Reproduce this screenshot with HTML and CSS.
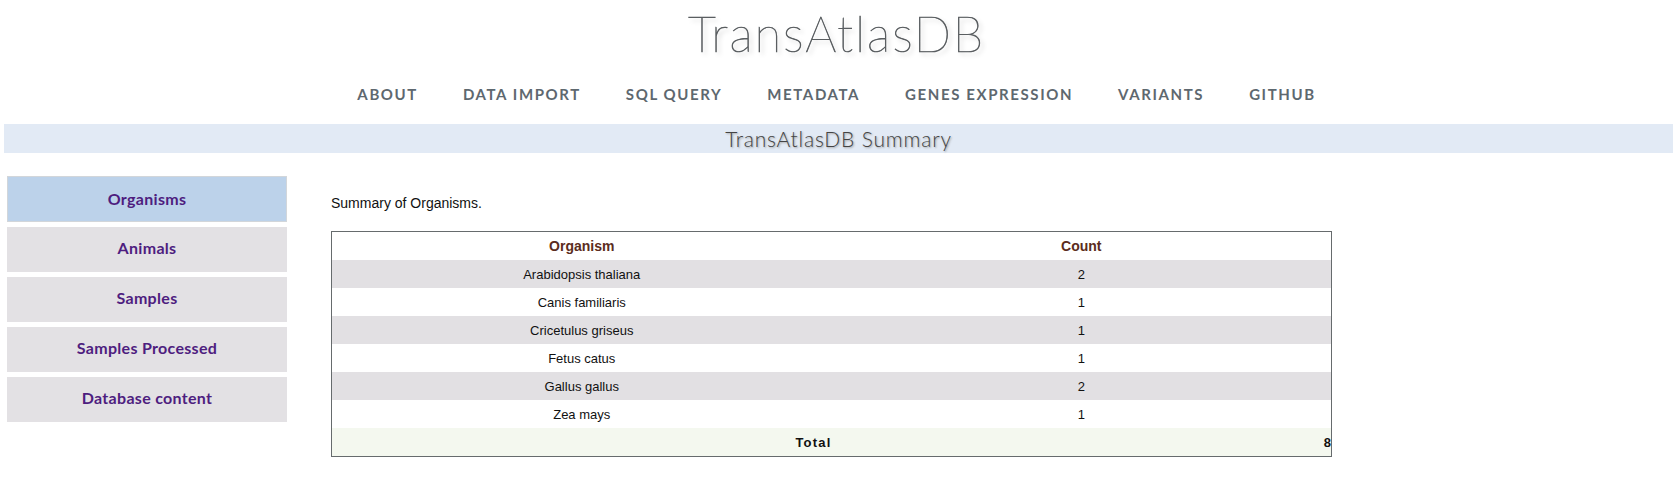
FILE: index.html
```html
<!DOCTYPE html>
<html>
<head>
<meta charset="utf-8">
<title>TransAtlasDB</title>
<link rel="stylesheet" href="styles.css">
</head>
<body>
<header class="masthead">
  <div class="brand">TransAtlasDB</div>
  <nav class="topnav">
    <a href="#">About</a>
    <a href="#">Data Import</a>
    <a href="#">SQL Query</a>
    <a href="#">Metadata</a>
    <a href="#">Genes Expression</a>
    <a href="#">Variants</a>
    <a href="#">GitHub</a>
  </nav>
</header>
<div class="pagebar">TransAtlasDB Summary</div>
<main class="layout">
  <aside class="sidenav">
    <a class="sideitem active" href="#">Organisms</a>
    <a class="sideitem" href="#">Animals</a>
    <a class="sideitem" href="#">Samples</a>
    <a class="sideitem" href="#">Samples Processed</a>
    <a class="sideitem" href="#">Database content</a>
  </aside>
  <section class="content">
    <p class="lead">Summary of Organisms.</p>
    <table class="summary">
      <thead>
        <tr><th>Organism</th><th>Count</th></tr>
      </thead>
      <tbody>
        <tr><td>Arabidopsis thaliana</td><td>2</td></tr>
        <tr><td>Canis familiaris</td><td>1</td></tr>
        <tr><td>Cricetulus griseus</td><td>1</td></tr>
        <tr><td>Fetus catus</td><td>1</td></tr>
        <tr><td>Gallus gallus</td><td>2</td></tr>
        <tr><td>Zea mays</td><td>1</td></tr>
      </tbody>
      <tfoot>
        <tr><th class="total-label">Total</th><th class="total-value">8</th></tr>
      </tfoot>
    </table>
  </section>
</main>
</body>
</html>
```
FILE: styles.css
```css
html, body {
  margin: 0;
  padding: 0;
  background: #ffffff;
}
body {
  font-family: "Liberation Sans", Arial, sans-serif;
  color: #111;
}
.masthead {
  text-align: center;
}
.brand {
  height: 66px;
  line-height: 66px;
  font-family: Lato, "Open Sans", sans-serif;
  font-weight: 200;
  font-size: 49px;
  letter-spacing: 1.9px;
  color: #5a5e61;
  -webkit-text-stroke: 0.7px #5a5e61;
  text-shadow: 3px 3px 4px #a9a9a9;
}
.topnav {
  height: 56px;
  margin-bottom: 2px;
  display: flex;
  justify-content: center;
  align-items: center;
  gap: 45px;
}
.topnav a {
  font-family: Lato, "Open Sans", sans-serif;
  font-weight: 700;
  font-size: 15px;
  letter-spacing: 1.6px;
  text-transform: uppercase;
  text-decoration: none;
  color: #5e686f;
}
.pagebar {
  margin-left: 4px;
  height: 29px;
  line-height: 29px;
  background: #e2eaf5;
  text-align: center;
  font-family: Lato, "Open Sans", sans-serif;
  font-weight: 300;
  font-size: 21px;
  letter-spacing: 0.8px;
  color: #444;
  text-shadow: 1px 1px 2px #a0a0a0;
}
.layout {
  display: flex;
  align-items: flex-start;
  padding-top: 23px;
}
.sidenav {
  margin-left: 7px;
  width: 280px;
  display: flex;
  flex-direction: column;
  gap: 5px;
}
.sideitem {
  height: 45px;
  box-sizing: border-box;
  padding-bottom: 5px;
  display: flex;
  align-items: center;
  justify-content: center;
  background: #e3e1e4;
  font-family: Lato, "Open Sans", sans-serif;
  font-weight: 700;
  font-size: 16px;
  letter-spacing: 0.3px;
  color: #4e1d7f;
  text-decoration: none;
}
.sideitem.active {
  height: 46px;
  padding-bottom: 2px;
  background: #bcd2ea;
  border: 1px solid #d2d6da;
}
.content {
  margin-left: 44px;
}
.lead {
  margin: 19px 0 20px 0;
  font-size: 14px;
  line-height: 16px;
  color: #111;
}
.summary {
  width: 1001px;
  box-sizing: border-box;
  border: 1px solid #666b6d;
  border-spacing: 0;
  border-collapse: separate;
  font-size: 13px;
}
.summary th,
.summary td {
  height: 28px;
  padding: 0;
  text-align: center;
  width: 50%;
}
.summary thead th {
  font-size: 14px;
  font-weight: 700;
  color: #5b2c20;
}
.summary tbody tr:nth-child(odd) {
  background: #e2e0e3;
}
.summary tbody td {
  color: #111;
}
.summary tfoot tr {
  background: #f4f8ef;
}
.summary tfoot th {
  font-weight: 700;
  font-size: 13px;
  color: #111;
  text-align: right;
}
.total-label {
  padding-right: 5px;
  letter-spacing: 1.2px;
}
.total-value {
  padding-right: 2px;
}
```
